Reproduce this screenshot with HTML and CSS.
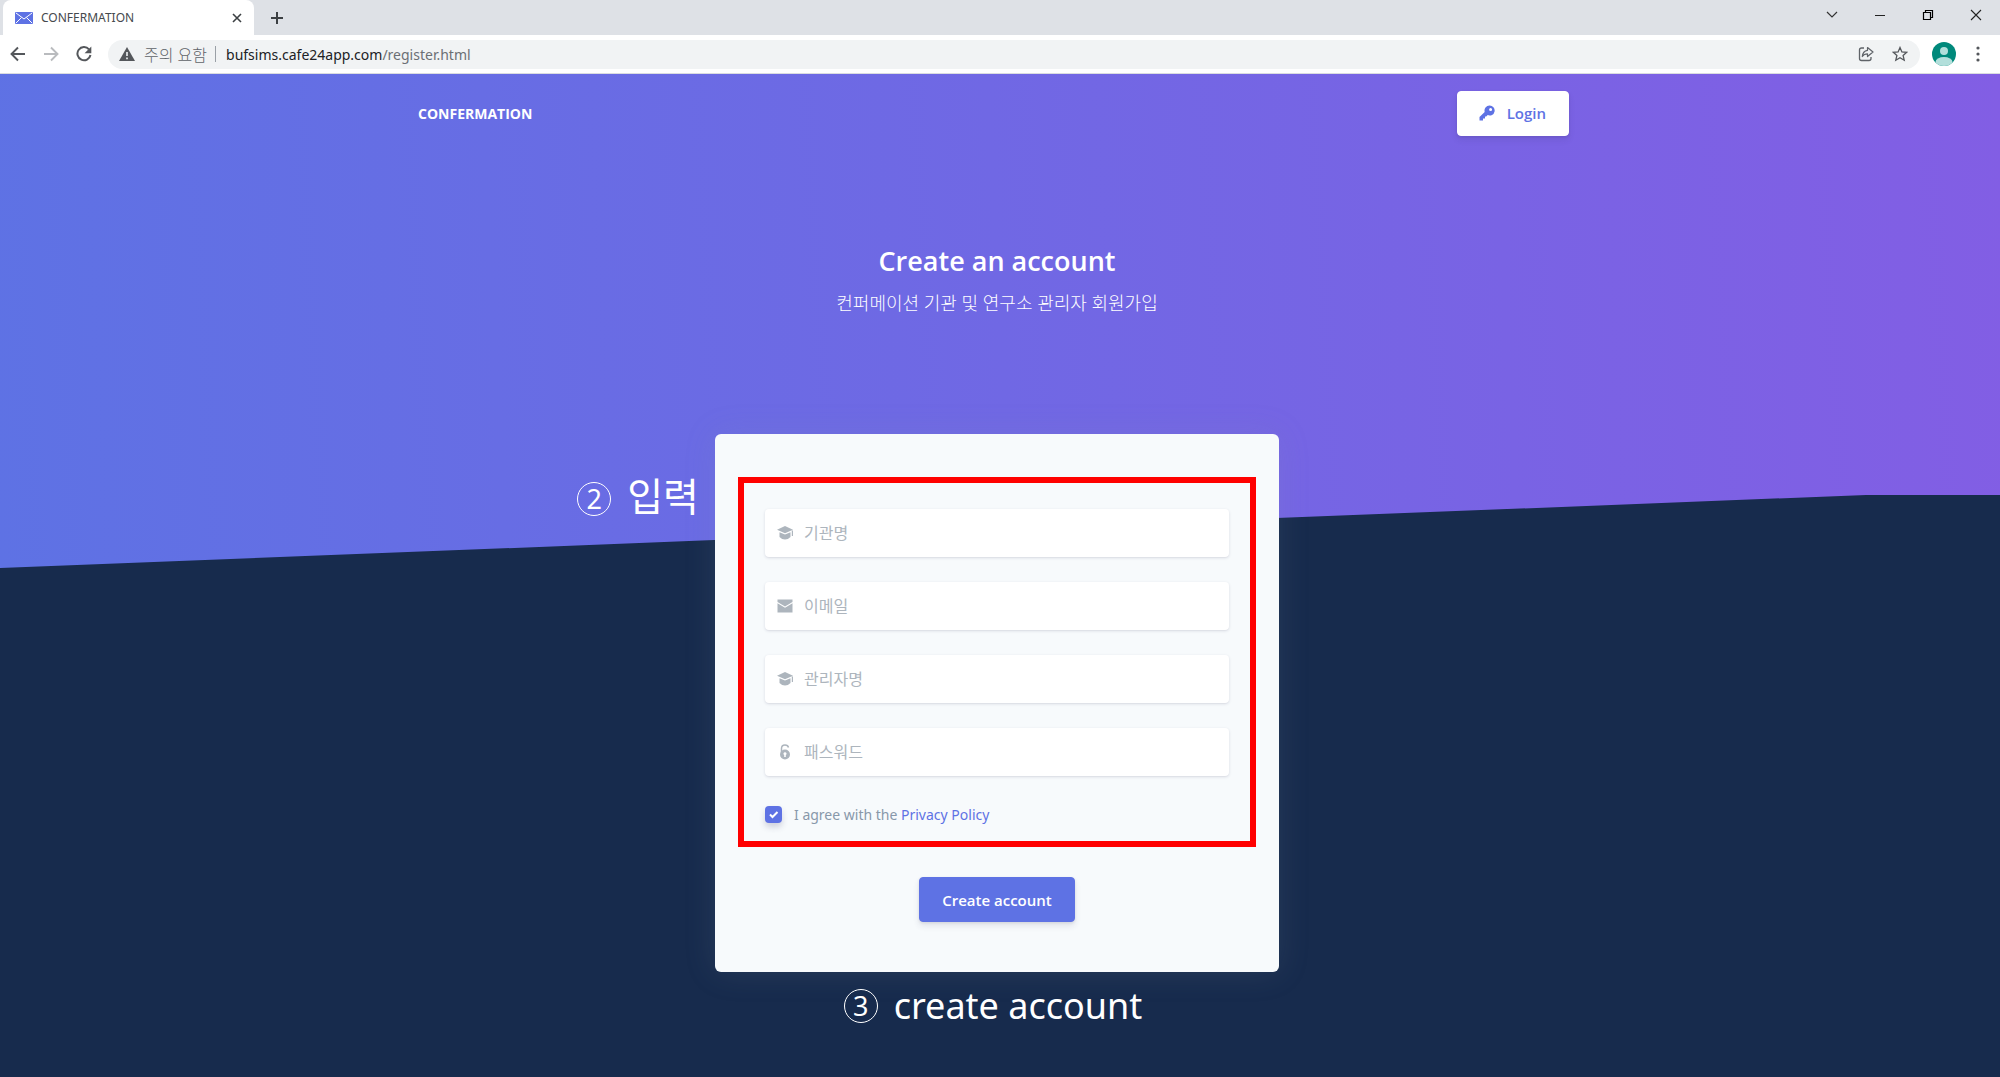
FILE: index.html
```html
<!DOCTYPE html>
<html lang="ko">
<head>
<meta charset="utf-8">
<meta name="viewport" content="width=device-width, initial-scale=1">
<title>CONFERMATION</title>
<link rel="stylesheet" href="styles.css">
</head>
<body>
<div class="tabs">
  <div class="tab">
    <svg class="favicon" width="18" height="12" viewBox="0 0 18 12"><rect width="18" height="12" rx="1" fill="#5e72e4"/><path d="M1 1l8 6 8-6M1 11l5.500-5.500M17 11l-5.500-5.500" fill="none" stroke="#fff"/></svg>
    <span class="tab-title">CONFERMATION</span>
    <button class="icon-btn" aria-label="Close tab"><svg width="10" height="10" viewBox="0 0 10 10"><path d="M1 1l8 8M9 1L1 9" stroke="#3c4043" stroke-width="1.600"/></svg></button>
  </div>
  <button class="icon-btn new-tab" aria-label="New tab"><svg width="14" height="14" viewBox="0 0 14 14"><path d="M7 1v12M1 7h12" stroke="#3c4043" stroke-width="2"/></svg></button>
  <div class="window-controls">
    <button class="icon-btn" aria-label="Search tabs"><svg width="12" height="12" viewBox="0 0 12 12"><path d="M1 3l5 5 5-5" fill="none" stroke="#333" stroke-width="1.200"/></svg></button>
    <button class="icon-btn" aria-label="Minimize"><svg width="12" height="12" viewBox="0 0 12 12"><path d="M1 6.500h10" stroke="#222"/></svg></button>
    <button class="icon-btn" aria-label="Restore"><svg width="12" height="12" viewBox="0 0 12 12"><path d="M1.500 3.500h7v7h-7zM3.500 3V1.500h7v7H9" fill="none" stroke="#000" stroke-width="1.200"/></svg></button>
    <button class="icon-btn" aria-label="Close"><svg width="12" height="12" viewBox="0 0 12 12"><path d="M1 1l10 10M11 1L1 11" stroke="#222" stroke-width="1.100"/></svg></button>
  </div>
</div>
<div class="toolbar">
  <button class="icon-btn" aria-label="Back"><svg width="16" height="16" viewBox="0 0 16 16"><path d="M15 8H2M8 1.500L1.500 8 8 14.500" fill="none" stroke="#54575b" stroke-width="1.900"/></svg></button>
  <button class="icon-btn" aria-label="Forward"><svg width="16" height="16" viewBox="0 0 16 16"><path d="M1 8h13M8 1.500L14.500 8 8 14.500" fill="none" stroke="#b9bbbe" stroke-width="1.900"/></svg></button>
  <button class="icon-btn" aria-label="Reload"><svg width="16" height="16" viewBox="0 0 16 16"><path d="M13 3.300A6.600 6.600 0 1 0 14.500 9" fill="none" stroke="#54575b" stroke-width="2"/><path d="M15.300 0.500v6.700H8.600z" fill="#54575b"/></svg></button>
  <div class="address">
    <svg width="16" height="14" viewBox="0 0 16 14"><path d="M8 0l8 14H0z" fill="#54575b"/><path d="M8 5v4M8 10.500v1.800" stroke="#f1f3f4" stroke-width="1.600"/></svg>
    <span class="warning">주의 요함</span>
    <span class="divider"></span>
    <span class="url">bufsims.cafe24app.com<span class="path">/register.html</span></span>
    <button class="icon-btn share" aria-label="Share"><svg width="16" height="16" viewBox="0 0 16 16"><path d="M6 2H3.500Q1.500 2 1.500 4v8.500q0 2 2 2h7.500q2 0 2-2V11" fill="none" stroke="#5f6368" stroke-width="1.300"/><path d="M9.500 4.300V1.500L15 6l-5.500 4.500V7.800Q6 7.800 4.300 10.500 4.800 5 9.500 4.300z" fill="none" stroke="#5f6368" stroke-width="1.200" stroke-linejoin="round"/></svg></button>
    <button class="icon-btn" aria-label="Bookmark"><svg width="16" height="16" viewBox="0 0 16 16"><path d="M8 1.500l1.900 4.400 4.800.4-3.600 3.200 1.100 4.700L8 11.700l-4.200 2.500 1.100-4.700L1.300 6.300l4.800-.4z" fill="none" stroke="#54575b" stroke-width="1.300"/></svg></button>
  </div>
  <button class="icon-btn avatar" aria-label="Profile"><svg width="24" height="24" viewBox="0 0 24 24"><defs><clipPath id="disc"><circle cx="12" cy="12" r="12"/></clipPath></defs><circle cx="12" cy="12" r="12" fill="#00897b"/><g clip-path="url(#disc)" fill="#b2dfdb"><circle cx="12" cy="9" r="4"/><ellipse cx="12" cy="20" rx="8.500" ry="5"/></g></svg></button>
  <button class="icon-btn" aria-label="Menu"><svg width="4" height="16" viewBox="0 0 4 16" fill="#54575b"><circle cx="2" cy="2" r="1.600"/><circle cx="2" cy="8" r="1.600"/><circle cx="2" cy="14" r="1.600"/></svg></button>
</div>
<div class="page">
  <nav class="navbar">
    <a class="brand" href="#">CONFERMATION</a>
    <a class="btn login" href="#"><svg width="16" height="16" viewBox="0 0 16 16"><path d="M10.500 0.500a5 5 0 0 0-4.800 6.400L0.500 12v3.500H4v-2h2v-2h1.200l1.500-1.400A5 5 0 1 0 10.500 0.500zM11.600 2.900a1.500 1.500 0 1 1 0 3 1.500 1.500 0 0 1 0-3z" fill="#5e72e4" fill-rule="evenodd"/></svg>Login</a>
  </nav>
  <header class="intro">
    <h1>Create an account</h1>
    <p>컨퍼메이션 기관 및 연구소 관리자 회원가입</p>
  </header>
  <main class="register">
    <p class="note note-input"><span class="num">2</span>입력</p>
    <form class="card" onsubmit="return false">
      <div class="highlight">
        <label class="field"><svg width="16" height="14" viewBox="0 0 16 14" fill="#adb5bd"><path d="M8 0l8 3.700-8 3.500-8-3.500zM2.500 6.200L8 8.500l5.500-2.300V11Q11 13.500 8 13.500T2.500 11zM14.800 4.500H16V10h-1.200z"/></svg><input type="text" placeholder="기관명" aria-label="기관명"></label>
        <label class="field"><svg width="16" height="14" viewBox="0 0 16 14" fill="#adb5bd"><path d="M.5.500h15v2.500L8 7.500.5 3z"/><path d="M0.500 4.300L8 8.800l7.500-4.500V13.500h-15z"/></svg><input type="email" placeholder="이메일" aria-label="이메일"></label>
        <label class="field"><svg width="16" height="14" viewBox="0 0 16 14" fill="#adb5bd"><path d="M8 0l8 3.700-8 3.500-8-3.500zM2.500 6.200L8 8.500l5.500-2.300V11Q11 13.500 8 13.500T2.500 11zM14.800 4.500H16V10h-1.200z"/></svg><input type="text" placeholder="관리자명" aria-label="관리자명"></label>
        <label class="field"><svg width="16" height="16" viewBox="0 0 16 16"><path d="M4.500 8V4.500Q4.500 1 8 1q3 0 3.500 2.500" fill="none" stroke="#adb5bd" stroke-width="1.500"/><path d="M8 5.500a5 5 0 1 1 0 10 5 5 0 0 1 0-10zm0 2.700a1.500 1.500 0 0 0-.8 2.800v2h1.600v-2A1.500 1.500 0 0 0 8 8.200z" fill="#adb5bd"/></svg><input type="password" placeholder="패스워드" aria-label="패스워드"></label>
        <div class="agree"><input type="checkbox" id="agree" checked><label for="agree">I agree with the <a href="#">Privacy Policy</a></label></div>
      </div>
      <button class="btn submit" type="submit">Create account</button>
    </form>
  </main>
  <p class="note note-create"><span class="num">3</span>create account</p>
</div>
</body>
</html>
```
FILE: styles.css
```css
* { box-sizing: border-box; }

body {
  margin: 0;
  min-height: 100vh;
  display: flex;
  flex-direction: column;
  background: #172b4d;
  font-family: "Open Sans", "Noto Sans CJK KR", sans-serif;
  font-size: 15px;
}

h1, p { margin: 0; }
a { color: #5e72e4; text-decoration: none; }
svg { display: block; flex: none; }

.icon-btn {
  display: flex;
  padding: 0;
  border: 0;
  background: none;
}

/* Browser tabs */
.tabs {
  display: flex;
  height: 35px;
  padding-left: 3px;
  background: #dee1e6;
}
.tab {
  display: flex;
  align-items: center;
  width: 251px;
  padding: 0 12px;
  border-radius: 8px 8px 0 0;
  background: #fff;
}
.tab-title {
  flex: 1;
  margin-left: 8px;
  color: #45494d;
  font: 12px "Noto Sans", sans-serif;
}
.new-tab { align-items: center; margin-left: 16px; }
.window-controls {
  display: flex;
  align-items: center;
  gap: 36px;
  height: 30px;
  margin-left: auto;
  padding-right: 18px;
}

/* Address bar */
.toolbar {
  display: flex;
  align-items: center;
  gap: 17px;
  height: 39px;
  padding: 0 20px 0 10px;
  border-bottom: 1px solid #dadce0;
  background: #fff;
}
.address {
  display: flex;
  flex: 1;
  align-items: center;
  height: 29px;
  margin: 0 -5px 0 -1px;
  padding: 0 12px 0 11px;
  border-radius: 15px;
  background: #f1f3f4;
  color: #202124;
  font: 14px "Noto Sans", "Noto Sans CJK KR", sans-serif;
}
.warning { margin-left: 9px; color: #5f6368; font-size: 16px; font-weight: 300; }
.divider {
  width: 1px;
  height: 16px;
  margin: 0 10px 0 8px;
  background: #9aa0a6;
}
.path { color: #6b6f74; }
.share { margin: 0 18px 0 auto; }
.avatar { margin-right: 3px; }

/* Page */
.page {
  position: relative;
  flex: 1;
  padding-right: 6px;
}
.page::before {
  content: "";
  position: absolute;
  z-index: -1;
  inset: 0 0 auto;
  height: 494px;
  background: linear-gradient(87deg, #5e72e4, #825ee4);
  clip-path: polygon(0 0, 100% 0, 100% 421px, 93.3% 421px, 0 100%);
}
.navbar {
  display: flex;
  align-items: center;
  justify-content: space-between;
  max-width: 1158px;
  margin: 0 auto;
  padding: 17px 7px 0 0;
}
.brand { color: #fff; font-size: 14px; font-weight: 700; }
.btn {
  display: flex;
  align-items: center;
  height: 45px;
  border: 1px solid #5e72e4;
  border-radius: 4px;
  box-shadow: 0 4px 6px rgba(50, 50, 93, .11), 0 1px 3px rgba(0, 0, 0, .08);
  font: 600 15px "Open Sans", sans-serif;
}
.login {
  gap: 12px;
  padding: 0 22px 1px 21px;
  border-color: #fff;
  background: #fff;
}
.intro {
  margin-top: 104px;
  color: #fff;
  text-align: center;
}
.intro h1 { font-size: 27px; font-weight: 600; line-height: 42px; }
.intro p { font-size: 18px; font-weight: 300; line-height: 42px; }

/* Registration form */
.register {
  display: grid;
  grid-template-columns: 1fr minmax(0, 564px) 1fr;
  margin-top: 110px;
}
.card {
  grid-column: 2;
  padding: 43px 23px 50px;
  border-radius: 6px;
  background: #f7fafc;
  box-shadow: 0 0 32px rgba(136, 152, 170, .15);
}
.highlight {
  display: grid;
  gap: 25px;
  padding: 26px 21px 14px;
  border: 6px solid #f00;
}
.field {
  display: flex;
  align-items: center;
  height: 48px;
  padding: 0 12px;
  border-radius: 4px;
  background: #fff;
  box-shadow: 0 1px 3px rgba(50, 50, 93, .15), 0 1px 0 rgba(0, 0, 0, .02);
}
.field input {
  flex: 1;
  min-width: 0;
  padding: 0 0 0 11px;
  border: 0;
  outline: 0;
  background: none;
  font: 16px "Open Sans", "Noto Sans CJK KR", sans-serif;
}
.field input::placeholder { color: #adb5bd; opacity: 1; }
.agree {
  display: flex;
  align-items: center;
  gap: 12px;
  height: 26px;
  color: #8898aa;
  font: 14px "Noto Sans", sans-serif;
}
.agree input {
  appearance: none;
  width: 17px;
  height: 17px;
  margin: 0;
  border-radius: 4px;
  background: #5e72e4 url("data:image/svg+xml,%3Csvg xmlns='http://www.w3.org/2000/svg' viewBox='0 0 17 17'%3E%3Cpath d='M5 8.500l2.500 2.500L12.500 6' fill='none' stroke='white' stroke-width='2'/%3E%3C/svg%3E");
  box-shadow: 0 4px 6px rgba(50, 50, 93, .2);
}
.submit {
  margin: 30px auto 0;
  padding: 0 22px;
  background: #5e72e4;
  color: #fff;
}

/* Step notes */
.note {
  display: flex;
  align-items: center;
  gap: 16px;
  color: #fff;
  font: 36px/50px "Noto Sans", "Noto Sans CJK KR", sans-serif;
}
.note-input {
  align-self: start;
  justify-self: end;
  margin: 37px 16px 0 0;
  font-size: 39px;
}
.note-input .num { margin-top: 6px; }
.note-create { justify-content: center; margin: 9px 8px 0 0; }
.num {
  width: 34px;
  height: 34px;
  border: 1px solid #fff;
  border-radius: 50%;
  font-size: 27px;
  line-height: 32px;
  text-align: center;
}
```
